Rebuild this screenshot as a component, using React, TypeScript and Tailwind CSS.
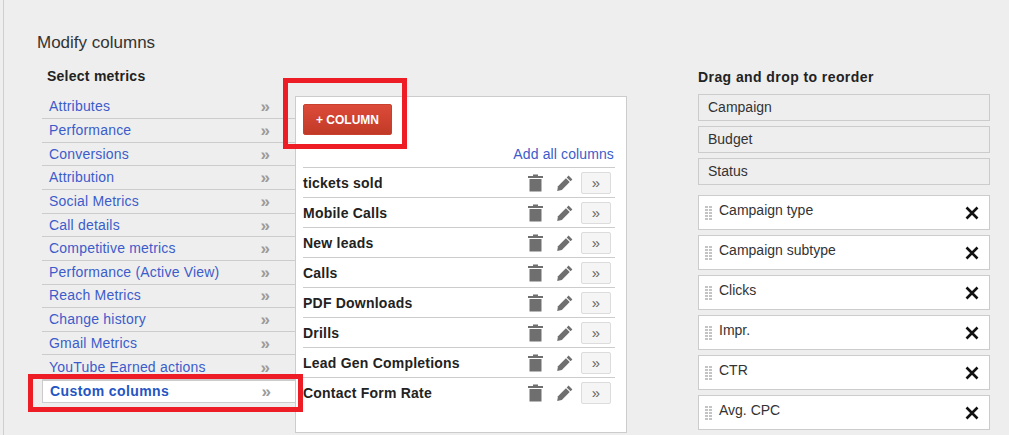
import React from 'react';

const metrics = [
    'Attributes',
    'Performance',
    'Conversions',
    'Attribution',
    'Social Metrics',
    'Call details',
    'Competitive metrics',
    'Performance (Active View)',
    'Reach Metrics',
    'Change history',
    'Gmail Metrics',
    'YouTube Earned actions',
];

const customColumns = [
    'tickets sold',
    'Mobile Calls',
    'New leads',
    'Calls',
    'PDF Downloads',
    'Drills',
    'Lead Gen Completions',
    'Contact Form Rate',
];

const fixedColumns = ['Campaign', 'Budget', 'Status'];
const movableColumns = ['Campaign type', 'Campaign subtype', 'Clicks', 'Impr.', 'CTR', 'Avg. CPC'];

const TrashIcon = () => (
    <svg width="15" height="18" viewBox="0 0 15 18" className="block">
        <path d="M5 0.5h5v1.5h5v2H0v-2h5z" fill="#6f6f6f" />
        <path d="M1.5 5h12v12.5h-12z" fill="#6f6f6f" />
    </svg>
);

const PencilIcon = () => (
    <svg width="16" height="16" viewBox="0 0 16 16" className="block">
        <path d="M11.6 0.6l3.8 3.8-1.9 1.9-3.8-3.8z" fill="#6f6f6f" />
        <path d="M8.9 3.3l3.8 3.8-7.9 7.9-4.6 0.9 0.8-4.7z" fill="#6f6f6f" />
    </svg>
);

const CloseIcon = () => (
    <svg width="14" height="14" viewBox="0 0 14 14" className="block">
        <path d="M1.5 1.5l11 11M12.5 1.5l-11 11" stroke="#111" strokeWidth="2.6" fill="none" />
    </svg>
);

const DragHandle = () => (
    <div className="grid grid-cols-2 gap-x-[1px] gap-y-[1px] w-[7px]">
        {Array.from({ length: 10 }).map((_, i) => (
            <span key={i} className="block w-[3px] h-[2px] bg-[#c4c4c4]" />
        ))}
    </div>
);

export default function App() {
    return (
        <div className="w-[1009px] h-[435px] overflow-hidden bg-[#eeeeee] font-['Liberation_Sans',Arial,sans-serif] text-[14px] text-[#222]">
            <div className="ml-[3px] h-full border-l border-[#cfcfcf] pt-[33px]">
                <h1 className="ml-[33px] h-[31px] text-[17px] leading-[19px] font-normal text-[#333]">Modify columns</h1>

                <div className="flex items-start ml-[38px]">
                    {/* Metric groups */}
                    <div className="w-[253px] shrink-0">
                        <h2 className="ml-[5px] h-[31.6px] pt-[3px] text-[14px] leading-[18px] font-bold tracking-[0.25px] text-[#222]">Select metrics</h2>
                        <ul>
                            {metrics.map((name) => (
                                <li
                                    key={name}
                                    className="h-[23.63px] box-border border-b border-[#cccccc] flex items-center justify-between pl-[7px] pr-[25px] last:border-b-0"
                                >
                                    <a className="text-[#3c5ccb] tracking-[0.2px]">{name}</a>
                                    <span className="text-[#9a9a9a] text-[17px] leading-none font-bold">»</span>
                                </li>
                            ))}
                        </ul>
                        <div className="relative w-[254px] h-[24px] box-border bg-white border border-[#cccccc] border-t-2 flex items-center justify-between pl-[7px] pr-[24px]">
                            <a className="text-[#2455c3] font-bold tracking-[0.4px]">Custom columns</a>
                            <span className="text-[#9a9a9a] text-[17px] leading-none font-bold">»</span>
                            <div className="absolute z-10 left-[-15px] top-[-7px] w-[275px] h-[38px] border-[5px] border-[#ee1c25]" />
                        </div>
                    </div>

                    {/* Custom columns panel */}
                    <div className="relative w-[332px] h-[337px] box-border mt-[32px] bg-white border border-[#cccccc] pl-[7px] pr-[11px] pt-[7px] shrink-0">
                        <button className="w-[89px] h-[31px] rounded-[2px] bg-gradient-to-b from-[#dd4b39] to-[#c13a27] border border-[#c9402e] text-white text-[12px] font-bold">
                            + COLUMN
                        </button>
                        <div className="text-right text-[#3c5ccb] mt-[10px] h-[22px] leading-[18px] pr-[1px] tracking-[0.12px]">Add all columns</div>
                        <ul>
                            {customColumns.map((name) => (
                                <li key={name} className="h-[30px] box-border border-t border-[#cccccc] flex items-center">
                                    <span className="flex-1 pt-[2px] font-bold tracking-[0.22px] text-[#222]">{name}</span>
                                    <TrashIcon />
                                    <span className="ml-[14px]"><PencilIcon /></span>
                                    <button className="ml-[8px] mr-[4px] w-[30px] h-[22px] rounded-[2px] bg-[#f5f5f5] border border-[#dcdcdc] text-[#666] text-[15px] leading-none">»</button>
                                </li>
                            ))}
                        </ul>
                        <div className="absolute z-10 left-[-13px] top-[-19px] w-[124px] h-[71px] border-[5px] border-[#ee1c25]" />
                    </div>

                    {/* Selected columns */}
                    <div className="ml-[71px] w-[292px] shrink-0">
                        <h2 className="h-[30px] pt-[4px] text-[14px] leading-[18px] font-bold tracking-[0.42px] text-[#222]">Drag and drop to reorder</h2>
                        <div className="flex flex-col gap-[5px]">
                            {fixedColumns.map((name) => (
                                <div key={name} className="h-[27px] box-border border border-[#cccccc] pl-[9px] flex items-center text-[#333]">
                                    {name}
                                </div>
                            ))}
                        </div>
                        <div className="flex flex-col gap-[5px] mt-[10px]">
                            {movableColumns.map((name) => (
                                <div key={name} className="h-[35px] box-border bg-white border border-[#cccccc] flex items-center pl-[6px] pr-[10px]">
                                    <DragHandle />
                                    <span className="ml-[7px] flex-1 -mt-[5px] text-[#333]">{name}</span>
                                    <CloseIcon />
                                </div>
                            ))}
                        </div>
                    </div>
                </div>
            </div>
        </div>
    );
}
